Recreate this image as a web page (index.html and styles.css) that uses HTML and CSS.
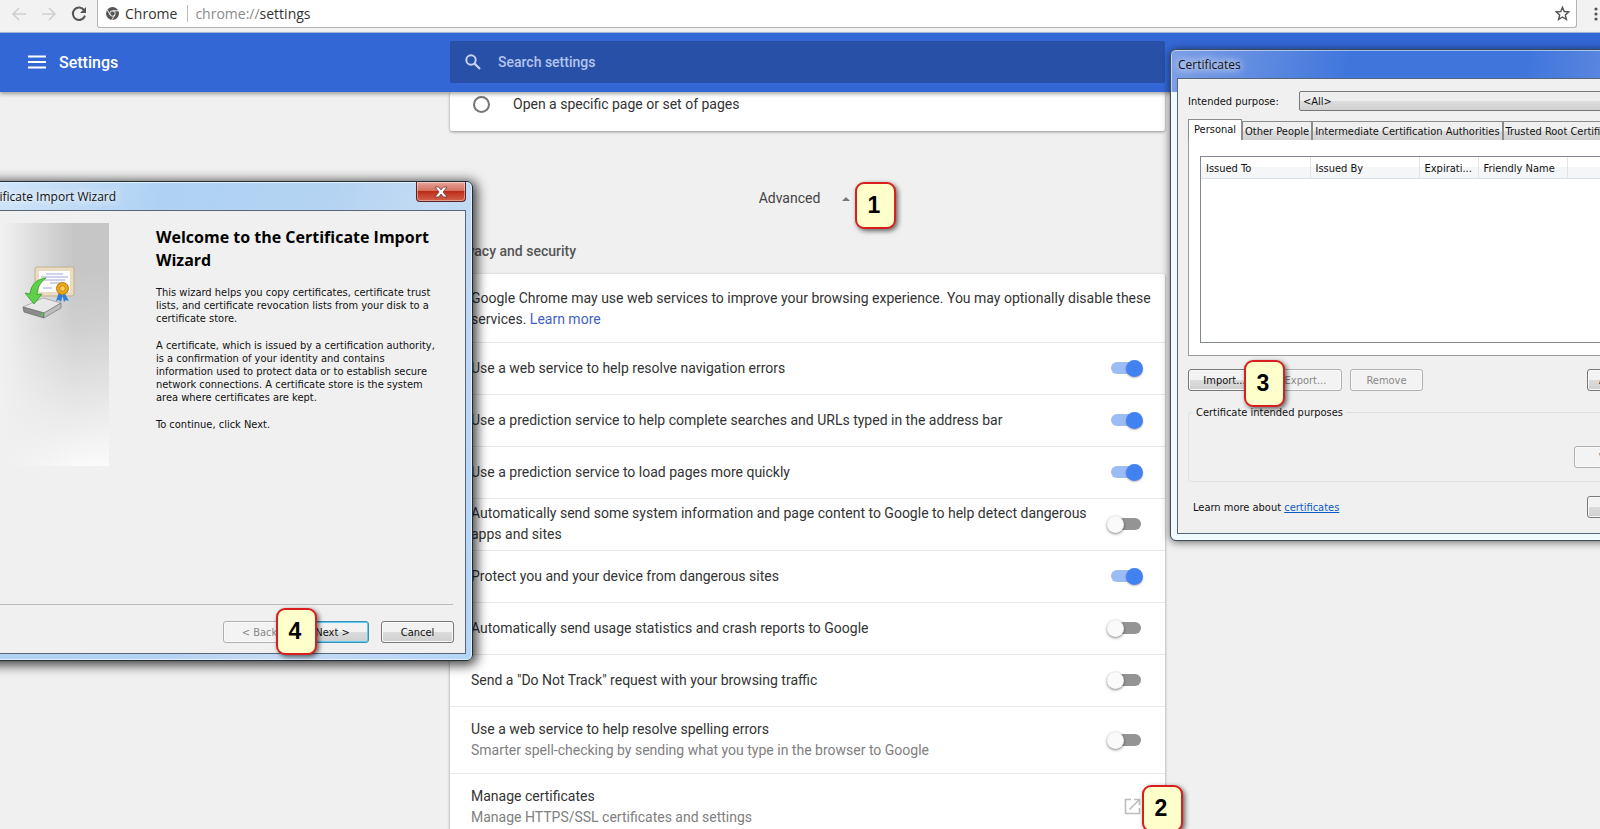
FILE: index.html
```html
<!DOCTYPE html>
<html lang="en">
<head>
    <meta charset="UTF-8">
    <meta name="viewport" content="width=device-width, initial-scale=1.0">
    <title>Settings</title>
    <link rel="stylesheet" href="styles.css">
</head>
<body>
    <div class="browser">
        <!-- Browser toolbar -->
        <div class="toolbar">
            <button class="nav-btn" aria-label="Back" disabled>
                <svg width="16" height="14" viewBox="0 0 16 14"><path d="M15 7H2M8 1L2 7l6 6" fill="none" stroke="#cfcfcf" stroke-width="1.6"/></svg>
            </button>
            <button class="nav-btn" aria-label="Forward" disabled>
                <svg width="16" height="14" viewBox="0 0 16 14"><path d="M1 7h13M8 1l6 6-6 6" fill="none" stroke="#cfcfcf" stroke-width="1.6"/></svg>
            </button>
            <button class="nav-btn" aria-label="Reload">
                <svg width="16" height="16" viewBox="0 0 16 16"><path d="M13.2 4.2A6.2 6.2 0 1 0 14 9.6" fill="none" stroke="#555" stroke-width="2"/><path d="M15 1v6H9z" fill="#555"/></svg>
            </button>
            <div class="address">
                <svg width="13" height="13" viewBox="0 0 14 14"><circle cx="7" cy="7" r="7" fill="#555"/><circle cx="7" cy="7" r="2.9" fill="none" stroke="#fff" stroke-width="1"/><path d="M7 4.1h6.2M4.5 8.5L1.4 3.2M9.5 8.5L6.4 13.8" stroke="#fff" stroke-width="1"/></svg>
                <span class="site">Chrome</span>
                <span class="url"><span class="scheme">chrome://</span>settings</span>
                <svg class="star" width="15" height="15" viewBox="0 0 16 16"><path d="M8 1.4l1.9 4.5 4.8.4-3.7 3.2 1.2 4.8L8 11.7l-4.2 2.6L5 9.5 1.3 6.3l4.8-.4z" fill="none" stroke="#555" stroke-width="1.5"/></svg>
            </div>
            <button class="nav-btn more" aria-label="Menu">
                <svg width="4" height="14" viewBox="0 0 4 14"><circle cx="2" cy="2" r="1.6" fill="#555"/><circle cx="2" cy="7" r="1.6" fill="#555"/><circle cx="2" cy="12" r="1.6" fill="#555"/></svg>
            </button>
        </div>

        <!-- Settings header -->
        <header class="header">
            <div class="brand">
                <button class="menu-btn" aria-label="Main menu">
                    <svg width="18" height="14" viewBox="0 0 18 14"><path d="M0 1.5h18M0 7h18M0 12.5h18" stroke="#fff" stroke-width="2"/></svg>
                </button>
                <h1>Settings</h1>
            </div>
            <div class="search">
                <svg width="16" height="16" viewBox="0 0 16 16"><circle cx="6" cy="6" r="4.7" fill="none" stroke="#c5d4f3" stroke-width="2"/><path d="M9.6 9.6l5.4 5.4" stroke="#c5d4f3" stroke-width="2.2"/></svg>
                <input type="text" placeholder="Search settings" aria-label="Search settings">
            </div>
        </header>

        <!-- Settings content -->
        <main class="content">
            <section class="card startup">
                <input type="radio" id="startup-pages" name="startup">
                <label for="startup-pages">Open a specific page or set of pages</label>
            </section>

            <button class="advanced">Advanced <span class="arrow"></span></button>

            <h2>Privacy and security</h2>
            <section class="card">
                <p class="intro">Google Chrome may use web services to improve your browsing experience. You may optionally disable these services. <a href="#">Learn more</a></p>
                <div class="row">
                    <label for="nav-errors">Use a web service to help resolve navigation errors</label>
                    <input class="toggle" type="checkbox" id="nav-errors" checked>
                </div>
                <div class="row">
                    <label for="search-predict">Use a prediction service to help complete searches and URLs typed in the address bar</label>
                    <input class="toggle" type="checkbox" id="search-predict" checked>
                </div>
                <div class="row">
                    <label for="page-predict">Use a prediction service to load pages more quickly</label>
                    <input class="toggle" type="checkbox" id="page-predict" checked>
                </div>
                <div class="row">
                    <label for="system-info">Automatically send some system information and page content to Google to help detect dangerous apps and sites</label>
                    <input class="toggle" type="checkbox" id="system-info">
                </div>
                <div class="row">
                    <label for="safe-browsing">Protect you and your device from dangerous sites</label>
                    <input class="toggle" type="checkbox" id="safe-browsing" checked>
                </div>
                <div class="row">
                    <label for="usage-stats">Automatically send usage statistics and crash reports to Google</label>
                    <input class="toggle" type="checkbox" id="usage-stats">
                </div>
                <div class="row">
                    <label for="dnt">Send a "Do Not Track" request with your browsing traffic</label>
                    <input class="toggle" type="checkbox" id="dnt">
                </div>
                <div class="row tall">
                    <label for="spelling">Use a web service to help resolve spelling errors
                        <small>Smarter spell-checking by sending what you type in the browser to Google</small>
                    </label>
                    <input class="toggle" type="checkbox" id="spelling">
                </div>
                <div class="row tall">
                    <label for="manage-certs">Manage certificates
                        <small>Manage HTTPS/SSL certificates and settings</small>
                    </label>
                    <button class="open-btn" id="manage-certs">
                        <svg width="17" height="17" viewBox="0 0 17 17"><path d="M7 1.5H1.5v14h14V10M10 1.5h5.5V7M15 2L5.5 11.5" fill="none" stroke="#bdbdbd" stroke-width="1.6"/></svg>
                    </button>
                </div>
            </section>
        </main>
    </div>

    <!-- Certificate Import Wizard window -->
    <div class="window wizard">
        <div class="titlebar">
            <span class="title">Certificate Import Wizard</span>
            <button class="close-btn" aria-label="Close">
                <svg width="14" height="12" viewBox="0 0 14 12"><path d="M1 1h3.6L7 3.9 9.4 1H13L9 6l4 5H9.4L7 8.1 4.6 11H1l4-5z" fill="#fff" stroke="#6e3a38" stroke-width=".8"/></svg>
            </button>
        </div>
        <div class="window-body">
            <div class="wizard-main">
                <div class="banner">
                    <svg width="54" height="54" viewBox="0 0 54 54">
                        <rect x="13" y="2" width="39" height="29" rx="2" fill="#e9dcc3" stroke="#c2b08e"/>
                        <rect x="17" y="6" width="31" height="21" fill="#fdfdfd"/>
                        <path d="M24 9h17M19 12h27M22 15h21M28 18h10M21 23h9" stroke="#8d93cf" stroke-width=".8"/>
                        <path d="M37 27l-3 9 3-1 2 2 2-8zM42 27l5 9-3-1-2 2-2-8z" fill="#2f7fd8"/>
                        <circle cx="40.5" cy="23.5" r="6" fill="#e9a81c" stroke="#b97a08"/>
                        <circle cx="40.5" cy="23.5" r="2.8" fill="#f7cf57" stroke="#b97a08" stroke-width=".7"/>
                        <path d="M1 42l20-9 18 5-17 10z" fill="#e8e8e8" stroke="#999" stroke-width=".7"/>
                        <path d="M1 42l21 6v5L2 47z" fill="#8c8c8c" stroke="#666" stroke-width=".7"/>
                        <path d="M22 48l17-10v5L22 53z" fill="#bdbdbd" stroke="#777" stroke-width=".7"/>
                        <path d="M19 47.5l2 .6v3.2l-2-.6z" fill="#3fd03f"/>
                        <path d="M24 13C14 14 9 20 8 29l-5-1 9 11 8-10-5 .5c0-6 3-12 9-16.5z" fill="#5fd04a" stroke="#2f9c2a" stroke-width=".8"/>
                    </svg>
                </div>
                <div class="wizard-text">
                    <h3>Welcome to the Certificate Import Wizard</h3>
                    <p>This wizard helps you copy certificates, certificate trust lists, and certificate revocation lists from your disk to a certificate store.</p>
                    <p>A certificate, which is issued by a certification authority, is a confirmation of your identity and contains information used to protect data or to establish secure network connections. A certificate store is the system area where certificates are kept.</p>
                    <p>To continue, click Next.</p>
                </div>
            </div>
            <div class="wizard-footer">
                <button class="win-btn" disabled>&lt; Back</button>
                <button class="win-btn default">Next &gt;</button>
                <button class="win-btn cancel">Cancel</button>
            </div>
        </div>
    </div>

    <!-- Certificates window -->
    <div class="window certs">
        <div class="titlebar">
            <span class="title">Certificates</span>
        </div>
        <div class="window-body">
            <div class="purpose">
                <label for="purpose">Intended purpose:</label>
                <select id="purpose">
                    <option>&lt;All&gt;</option>
                </select>
            </div>
            <div class="tabs">
                <button class="tab active">Personal</button>
                <button class="tab">Other People</button>
                <button class="tab">Intermediate Certification Authorities</button>
                <button class="tab">Trusted Root Certification</button>
            </div>
            <div class="tab-panel">
                <div class="list">
                    <table>
                        <thead>
                            <tr><th class="wide">Issued To</th><th class="wide">Issued By</th><th class="date">Expirati...</th><th class="name">Friendly Name</th><th></th></tr>
                        </thead>
                    </table>
                </div>
            </div>
            <div class="actions">
                <button class="win-btn">Import...</button>
                <button class="win-btn" disabled>Export...</button>
                <button class="win-btn" disabled>Remove</button>
                <button class="win-btn last">Advanced</button>
            </div>
            <fieldset>
                <legend>Certificate intended purposes</legend>
                <button class="win-btn" disabled>View</button>
            </fieldset>
            <div class="learn">
                <span>Learn more about <a href="#">certificates</a></span>
                <button class="win-btn">Close</button>
            </div>
        </div>
    </div>

    <!-- Step markers -->
    <div class="step step-1">1</div>
    <div class="step step-2">2</div>
    <div class="step step-3">3</div>
    <div class="step step-4">4</div>
</body>
</html>
```

FILE: styles.css
```css
* {
    box-sizing: border-box;
}
body {
    margin: 0;
    height: 100vh;
    position: relative;
    overflow: hidden;
    background: #f0f0f0;
    color: #333;
    font-family: Roboto, sans-serif;
    font-size: 14px;
    line-height: 21px;
}
button {
    font-family: inherit;
    cursor: pointer;
}
h1, h2, h3, p {
    margin: 0;
}

/* Browser, a scrollbar's width wider than the screen */
.browser {
    width: calc(100% + 15px);
}
.toolbar {
    display: flex;
    height: 33px;
    background: #f2f2f2;
    border-bottom: 1px solid #a9b9dc;
    padding-left: 4px;
}
.nav-btn {
    border: none;
    background: none;
    padding: 0;
    width: 30px;
    height: 27px;
    display: flex;
    align-items: center;
    justify-content: center;
}
.address {
    flex: 1;
    display: flex;
    align-items: center;
    height: 28px;
    margin-left: 3px;
    padding: 0 6px 0 8px;
    background: #fff;
    border: 1px solid #b4b4b4;
    border-top: none;
    border-radius: 0 0 3px 3px;
    font-family: "Open Sans", sans-serif;
    font-size: 14px;
    color: #333;
}
.site {
    margin-left: 6px;
    padding-right: 10px;
    border-right: 1px solid #bbb;
    line-height: 17px;
}
.url {
    margin-left: 7px;
}
.scheme {
    color: #8a8a8a;
}
.star {
    margin-left: auto;
}
.more {
    width: 38px;
}

/* Header */
.header {
    position: relative;
    display: grid;
    grid-template-columns: 1fr 715px 1fr;
    align-items: center;
    height: 59px;
    padding-bottom: 1px;
    background: #3367d6;
    box-shadow: 0 2px 4px rgba(0, 0, 0, 0.35);
}
.brand {
    display: flex;
    align-items: center;
    gap: 13px;
    padding-left: 28px;
    color: #fff;
}
.menu-btn {
    border: none;
    background: none;
    padding: 0;
    display: flex;
}
h1 {
    font-size: 16px;
    font-weight: 500;
}
.search {
    display: flex;
    align-items: center;
    height: 42px;
    padding-left: 15px;
    gap: 15px;
    background: #2850a7;
    border-radius: 2px;
}
.search input {
    flex: 1;
    border: none;
    outline: none;
    background: none;
    color: #fff;
    font-family: inherit;
    font-size: 14px;
    font-weight: 500;
}
.search input::placeholder {
    color: #b3c5ee;
}

/* Settings cards */
.content {
    width: 715px;
    margin: 0 auto;
}
.card {
    background: #fff;
    border-radius: 2px;
    box-shadow: 0 1px 3px rgba(0, 0, 0, 0.4);
}
.startup {
    display: flex;
    align-items: flex-start;
    height: 39px;
    padding: 2px 23px;
    gap: 23px;
}
.startup input {
    appearance: none;
    width: 17px;
    height: 17px;
    margin: 2px 0 0;
    border: 2px solid #757575;
    border-radius: 50%;
}
.advanced {
    display: flex;
    align-items: center;
    gap: 22px;
    margin: 51px auto 0;
    padding: 6px 6px 6px 0;
    border: none;
    background: none;
    color: #444;
    font-size: 14px;
    line-height: 21px;
}
.arrow {
    border: 4px solid transparent;
    border-top: none;
    border-bottom-color: #777;
}
h2 {
    padding: 26px 0 12px;
    font-size: 14px;
    font-weight: 500;
    color: #555;
}
.intro {
    padding: 14px 8px 12px 21px;
}
.intro a {
    color: #3f5fc4;
    text-decoration: none;
}
.row {
    display: flex;
    align-items: center;
    justify-content: space-between;
    height: 52px;
    padding: 0 21px 1px;
    border-top: 1px solid #e8e8e8;
}
.row label {
    max-width: 620px;
}
.row small {
    display: block;
    font-size: 14px;
    color: #808080;
}
.tall {
    height: 67px;
}
.toggle {
    appearance: none;
    position: relative;
    width: 30px;
    height: 12px;
    margin: 0 3px 0 0;
    border-radius: 6px;
    background: #949494;
}
.toggle::before {
    content: "";
    position: absolute;
    top: -2px;
    left: -4px;
    width: 17px;
    height: 17px;
    border-radius: 50%;
    background: #fafafa;
    box-shadow: 0 1px 3px rgba(0, 0, 0, 0.5);
}
.toggle:checked {
    background: #9cbcf5;
}
.toggle:checked::before {
    left: 15px;
    background: #4182f0;
    box-shadow: 0 1px 2px rgba(0, 0, 0, 0.3);
}
.open-btn {
    border: none;
    background: none;
    padding: 0 3px;
    display: flex;
}

/* Windows */
.window {
    position: absolute;
    display: flex;
    flex-direction: column;
    padding: 0 6px 6px;
    border: 1px solid #222d38;
    border-radius: 6px;
    font-family: "DejaVu Sans Condensed", "DejaVu Sans", sans-serif;
    font-size: 11px;
    line-height: 13px;
    color: #111;
}
.titlebar {
    display: flex;
    justify-content: space-between;
    height: 28px;
    font-family: "Open Sans", sans-serif;
    font-size: 12px;
    line-height: 30px;
}
.title {
    text-shadow: 0 0 8px #fff, 0 0 8px #fff;
}
.window-body {
    flex: 1;
    display: flex;
    flex-direction: column;
    background: #f0f0f0;
    border: 1px solid #56677c;
}
.win-btn {
    width: 73px;
    height: 22px;
    padding: 0;
    border: 1px solid #777;
    border-radius: 3px;
    background: linear-gradient(#f2f2f2 50%, #dcdcdc 50%, #cfcfcf);
    box-shadow: inset 0 0 0 1px #fafafa;
    font-size: 11px;
    color: #111;
}
.win-btn:disabled {
    background: #f3f3f3;
    border-color: #b0b0b0;
    color: #888;
}
.win-btn.default {
    border-color: #3c8fb5;
    box-shadow: inset 0 0 0 1px #5fcbf0;
}

/* Import wizard */
.wizard {
    left: -41px;
    top: 181px;
    width: 514px;
    height: 480px;
    background: linear-gradient(110deg, #d8e9fb, #afd2f3 30%, #b4d3f2 55%, #c3dbf4 70%, #b5d5f7);
    box-shadow: inset 0 0 0 1px #e4f1fd, 2px 2px 12px 2px rgba(0, 0, 0, 0.75);
}
.wizard .titlebar {
    padding-left: 10px;
}
.close-btn {
    display: flex;
    align-items: center;
    justify-content: center;
    width: 50px;
    height: 20px;
    padding: 0;
    border: 1px solid #5e2020;
    border-top: none;
    border-radius: 0 0 4px 4px;
    background: linear-gradient(#e8a79b, #d5705f 45%, #bc2d18 50%, #d4614b);
    box-shadow: inset 0 0 0 1px rgba(255, 255, 255, 0.4);
}
.wizard-main {
    flex: 1;
    display: flex;
    gap: 47px;
    margin-right: 12px;
    padding: 12px 0 0;
    border-bottom: 1px solid #bbb;
}
.banner {
    width: 142px;
    height: 243px;
    padding: 42px 0 0 55px;
    background: linear-gradient(to right, #f0f0f0 25%, transparent 75%), linear-gradient(170deg, #c6c6c6 25%, #cfcfcf 45%, #e3e3e3 70%, #fbfbfb);
}
.wizard-text {
    flex: 1;
    padding-top: 3px;
}
.wizard-text h3 {
    font-family: "Open Sans", sans-serif;
    font-size: 16px;
    line-height: 23px;
    color: #000;
}
.wizard-text p {
    max-width: 281px;
    margin-top: 14px;
}
.wizard-footer {
    display: flex;
    justify-content: flex-end;
    padding: 16px 11px 10px;
}
.cancel {
    margin-left: 12px;
}

/* Certificates */
.certs {
    left: 1170px;
    top: 49px;
    width: 507px;
    height: 492px;
    background: linear-gradient(100deg, #7d9fe6, #4076dc 35%, #4076dc 70%, #7396e2) 0 0 / 100% 42px no-repeat, #f0fafb;
    border-color: #3c4c58;
    box-shadow: inset 0 0 0 1px rgba(255, 255, 255, 0.5), 0 1px 8px rgba(0, 0, 0, 0.6);
}
.certs .titlebar {
    padding-left: 1px;
}
.certs .window-body {
    padding: 12px 9px 0 10px;
}
.purpose {
    display: flex;
    align-items: center;
    justify-content: space-between;
}
.purpose select {
    appearance: none;
    width: 361px;
    height: 20px;
    padding: 0 3px;
    border: 1px solid #777;
    border-radius: 2px;
    background: linear-gradient(#eee 50%, #dedede 50%, #d0d0d0);
    font-family: inherit;
    font-size: 11px;
    color: #111;
}
.tabs {
    display: flex;
    align-items: flex-end;
    height: 29px;
    overflow: hidden;
}
.tab {
    height: 19px;
    padding: 0 2px;
    border: 1px solid #8c8c8c;
    border-bottom: none;
    background: linear-gradient(#f0f0f0 50%, #dcdcdc 50%, #d2d2d2);
    font-size: 11px;
    color: #111;
    white-space: nowrap;
}
.tab.active {
    height: 21px;
    padding: 0 5px 2px;
    background: #fff;
}
.tab-panel {
    height: 216px;
    padding: 16px 11px 12px;
    background: #fff;
    border: 1px solid #9a9a9a;
    border-top: none;
}
.list {
    height: 100%;
    border: 1px solid #828790;
}
.list table {
    width: 100%;
    border-collapse: collapse;
    table-layout: fixed;
}
.list th {
    height: 21px;
    padding: 2px 5px 0;
    border-right: 1px solid #e2e4e8;
    border-bottom: 1px solid #dcdfe3;
    background: linear-gradient(#fff 50%, #f5f6f8 50%);
    font-weight: normal;
    text-align: left;
    white-space: nowrap;
}
.list .wide {
    width: 109px;
}
.list .date {
    width: 59px;
}
.list .name {
    width: 89px;
}
.actions {
    display: flex;
    margin-top: 13px;
    gap: 8px;
}
.actions .last {
    margin-left: auto;
}
fieldset {
    display: flex;
    justify-content: flex-end;
    margin: 15px 0 0;
    padding: 27px 12px 13px 4px;
    border: 1px solid #dde1e6;
    border-radius: 3px;
}
legend {
    padding: 0 3px;
}
.learn {
    display: flex;
    align-items: center;
    justify-content: space-between;
    margin-top: 14px;
    padding-left: 5px;
}
.learn a {
    color: #0a5bc4;
}

/* Step markers */
.step {
    position: absolute;
    display: flex;
    align-items: center;
    justify-content: center;
    width: 41px;
    height: 47px;
    padding-right: 3px;
    border: 2px solid #d81e1e;
    border-radius: 9px;
    background: #ffc;
    box-shadow: 2px 2px 5px rgba(0, 0, 0, 0.6);
    font-family: "Liberation Sans", Arial, sans-serif;
    font-size: 23px;
    font-weight: bold;
    color: #000;
}
.step-1 {
    left: 855px;
    top: 182px;
}
.step-2 {
    left: 1142px;
    top: 785px;
}
.step-3 {
    left: 1244px;
    top: 360px;
}
.step-4 {
    left: 276px;
    top: 608px;
}
```
